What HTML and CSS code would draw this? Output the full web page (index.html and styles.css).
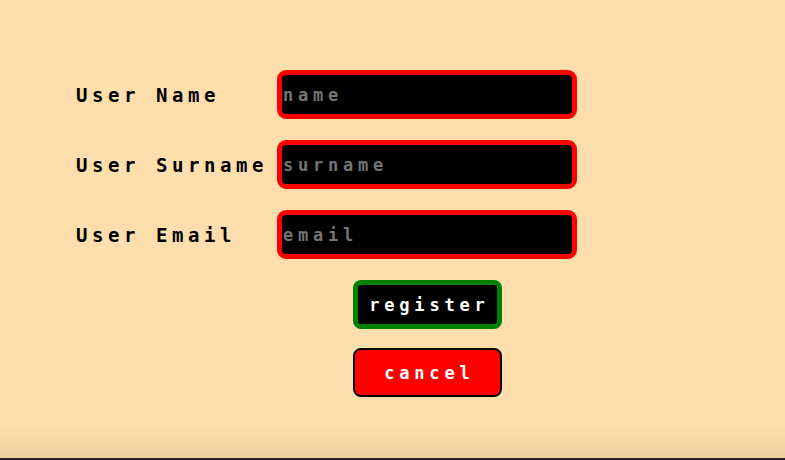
FILE: index.html
```html
<!DOCTYPE html>
<html lang="en">
<head>
<meta charset="utf-8">
<title>Register</title>
<link rel="stylesheet" href="styles.css">
</head>
<body>
<main class="page">
  <form class="form">
    <label class="label" for="name">User Name</label>
    <input class="field" id="name" type="text" placeholder="name">
    <label class="label" for="surname">User Surname</label>
    <input class="field" id="surname" type="text" placeholder="surname">
    <label class="label" for="email">User Email</label>
    <input class="field" id="email" type="text" placeholder="email">
    <div class="actions">
      <button class="btn btn-register" type="button">register</button>
      <button class="btn btn-cancel" type="button">cancel</button>
    </div>
  </form>
</main>
</body>
</html>
```
FILE: styles.css
```css
html, body {
  margin: 0;
  padding: 0;
}
body {
  background: #ffdead;
  font-family: "DejaVu Sans Mono", "Liberation Mono", monospace;
}
.page {
  box-sizing: border-box;
  height: 460px;
  border-bottom: 2px solid #222;
  background: linear-gradient(to bottom, #ffdead 0, #ffdead 425px, #f0d0a2 458px);
  padding: 70px 0 0 76px;
}
.form {
  display: grid;
  grid-template-columns: 201px 300px;
  row-gap: 21px;
  align-items: center;
}
.label {
  font-size: 19px;
  font-weight: bold;
  letter-spacing: 4.56px;
  color: #000;
  white-space: nowrap;
}
.field {
  box-sizing: border-box;
  width: 300px;
  height: 49px;
  margin: 0;
  background: #000;
  border: 5px solid #ff0000;
  border-radius: 9px;
  padding: 0 0 0 1px;
  font-family: inherit;
  font-size: 17px;
  font-weight: bold;
  letter-spacing: 4.77px;
  color: #fff;
  outline: none;
}
.field::placeholder {
  color: #747474;
}
.actions {
  grid-column: 2;
  display: flex;
  flex-direction: column;
  align-items: center;
  gap: 19px;
}
.btn {
  box-sizing: border-box;
  width: 149px;
  height: 49px;
  margin: 0;
  padding: 0;
  font-family: inherit;
  font-size: 17px;
  font-weight: bold;
  letter-spacing: 4.77px;
  text-indent: 4.77px;
  color: #fff;
  border-radius: 8px;
  cursor: pointer;
}
.btn-register {
  background: #000;
  border: 5px solid #008000;
}
.btn-cancel {
  background: #ff0000;
  border: 2px solid #000;
}
```
